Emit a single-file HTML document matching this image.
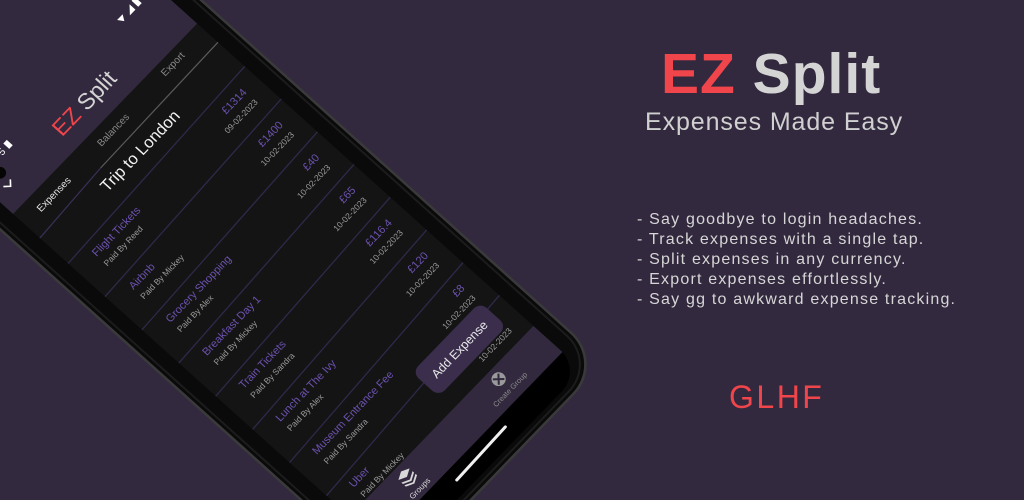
<!DOCTYPE html>
<html><head><meta charset="utf-8"><style>
html,body{margin:0;padding:0;background:#33293f;width:1024px;height:500px;overflow:hidden;}
body{position:relative;font-family:"Liberation Sans",sans-serif;}
svg{position:absolute;left:0;top:0;display:block;}
.t{position:absolute;white-space:nowrap;margin:0;}
#title{left:661px;top:46px;font-size:57px;line-height:57px;font-weight:bold;letter-spacing:1px;color:#d4d4d4;}
#title span{color:#f0454a;}
#sub{left:645px;top:110px;font-size:25px;line-height:25px;letter-spacing:0.9px;color:#d0d0d0;}
#list{left:637px;top:210px;font-size:16px;line-height:20px;letter-spacing:1.2px;color:#d6d6d6;}
#glhf{left:729px;top:381px;font-size:32px;line-height:32px;letter-spacing:2.5px;color:#f0454a;}
</style></head><body>
<svg width="1024" height="500" viewBox="0 0 1024 500" xmlns="http://www.w3.org/2000/svg" font-family="Liberation Sans, sans-serif">
<rect width="1024" height="500" fill="#33293f"/>
<defs><clipPath id="scr"><rect x="0" y="-220" width="265" height="738" rx="30"/></clipPath></defs>
<g transform="matrix(0.695,-0.719,0.744,0.669,13,214)">
  <rect x="-20" y="-240" width="305" height="768" rx="44" fill="#0a0a0a" stroke="#3a3a3a" stroke-width="2.5"/>
  <rect x="-15" y="-235" width="295" height="758" rx="40" fill="none" stroke="#1c1c1c" stroke-width="2"/>
  <g clip-path="url(#scr)">
    <rect x="0" y="-220" width="265" height="740" fill="#141414"/>
    <rect x="0" y="-220" width="265" height="220" fill="#33293f"/>
    <text x="36" y="-48" font-size="10" fill="#fff">5</text>
    <rect x="46" y="-56" width="5" height="8" fill="#fff"/>
    <path d="M214 -60 l8 0 l-4 6 z" fill="#fff"/>
    <path d="M226 -54 l8 -8 l0 8 z" fill="#fff"/>
    <rect x="238" y="-63" width="5" height="9" fill="#fff"/>
    <circle cx="22" cy="-38" r="6" fill="#050505"/>
    <path d="M14 -26 l5 5 l5 -5" fill="none" stroke="#fff" stroke-width="1.6"/>
    <text x="130" y="-18" font-size="23" text-anchor="middle"><tspan fill="#f0454a">EZ</tspan><tspan fill="#d4d4d4"> Split</tspan></text>
    <text x="20" y="19" font-size="10" fill="#e6e6e6">Expenses</text>
    <text x="109" y="17" font-size="10" fill="#8a8a8a">Balances</text>
    <text x="204" y="14" font-size="10" fill="#8a8a8a">Export</text>
    <line x1="0" y1="36" x2="93" y2="31" stroke="#3b2f58" stroke-width="1.2"/>
    <line x1="93" y1="31" x2="265" y2="28" stroke="#5a5a5a" stroke-width="1.2"/>
    <text x="132" y="53" font-size="16.5" fill="#f2f2f2" text-anchor="middle">Trip to London</text>
    <g stroke="#30284a" stroke-width="1.3">
      <line x1="0" y1="74" x2="265" y2="64"/>
      <line x1="0" y1="123.6" x2="265" y2="112.9"/>
      <line x1="0" y1="173.2" x2="265" y2="161.8"/>
      <line x1="0" y1="222.8" x2="265" y2="210.7"/>
      <line x1="0" y1="272.4" x2="265" y2="259.6"/>
      <line x1="0" y1="322" x2="265" y2="308.5"/>
      <line x1="0" y1="371.6" x2="265" y2="357.4"/>
      <line x1="0" y1="421.2" x2="265" y2="406.3"/>
    </g>
    <g font-size="11" fill="#6c52b0">
      <text x="24" y="90">Flight Tickets</text>
      <text x="24" y="139.6">Airbnb</text>
      <text x="24" y="189">Grocery Shopping</text>
      <text x="24" y="238.2">Breakfast Day 1</text>
      <text x="24" y="287.5">Train Tickets</text>
      <text x="24" y="336.8">Lunch at The Ivy</text>
      <text x="24" y="386">Museum Entrance Fee</text>
      <text x="24" y="435.4">Uber</text>
    </g>
    <g font-size="8.5" fill="#9a9a9a">
      <text x="24" y="104.4">Paid By Reed</text>
      <text x="24" y="153.7">Paid By Mickey</text>
      <text x="24" y="203">Paid By Alex</text>
      <text x="24" y="252.3">Paid By Mickey</text>
      <text x="24" y="301.6">Paid By Sandra</text>
      <text x="24" y="350.9">Paid By Alex</text>
      <text x="24" y="400.2">Paid By Sandra</text>
      <text x="24" y="449.5">Paid By Mickey</text>
    </g>
    <g font-size="11" fill="#6c52b0" text-anchor="end">
      <text x="247" y="84.3">£1314</text>
      <text x="247" y="133.1">£1400</text>
      <text x="247" y="181.9">£40</text>
      <text x="247" y="230.7">£65</text>
      <text x="247" y="279.5">£116.4</text>
      <text x="247" y="328.3">£120</text>
      <text x="247" y="377.1">£8</text>
    </g>
    <g font-size="8.5" fill="#9a9a9a" text-anchor="end">
      <text x="247" y="99">09-02-2023</text>
      <text x="247" y="147.8">10-02-2023</text>
      <text x="247" y="196.6">10-02-2023</text>
      <text x="247" y="245.4">10-02-2023</text>
      <text x="247" y="294.2">10-02-2023</text>
      <text x="247" y="343">10-02-2023</text>
      <text x="247" y="391.8">10-02-2023</text>
      <text x="247" y="440.6">10-02-2023</text>
    </g>
    <rect x="149" y="397" width="98" height="36" rx="9" fill="#3a2e4c"/>
    <text x="198" y="419.5" font-size="12.5" fill="#e8e8e8" text-anchor="middle">Add Expense</text>
    <rect x="0" y="452" width="265" height="40" fill="#33293f"/>
    <g fill="#d8d8d8">
      <path d="M60 462 l8 -4 l8 4 l-8 4 z"/>
      <path d="M60 466 l8 4 l8 -4 l0 2 l-8 4 l-8 -4 z"/>
      <path d="M60 470 l8 4 l8 -4 l0 2 l-8 4 l-8 -4 z"/>
    </g>
    <text x="68" y="486" font-size="8" fill="#d8d8d8" text-anchor="middle">Groups</text>
    <circle cx="202" cy="464" r="7" fill="#9a9a9a"/>
    <path d="M198 460 l8 8 M206 460 l-8 8" stroke="#33293f" stroke-width="2"/>
    <text x="202" y="482" font-size="7.5" fill="#8a8a8a" text-anchor="middle">Create Group</text>
    <rect x="0" y="491" width="265" height="40" fill="#000"/>
    <line x1="99" y1="504" x2="171" y2="502" stroke="#f0f0f0" stroke-width="3" stroke-linecap="round"/>
  </g>
</g>
</svg>
<div class="t" id="title"><span>EZ</span> Split</div>
<div class="t" id="sub">Expenses Made Easy</div>
<div class="t" id="list">- Say goodbye to login headaches.<br>- Track expenses with a single tap.<br>- Split expenses in any currency.<br>- Export expenses effortlessly.<br>- Say gg to awkward expense tracking.</div>
<div class="t" id="glhf">GLHF</div>
</body></html>
